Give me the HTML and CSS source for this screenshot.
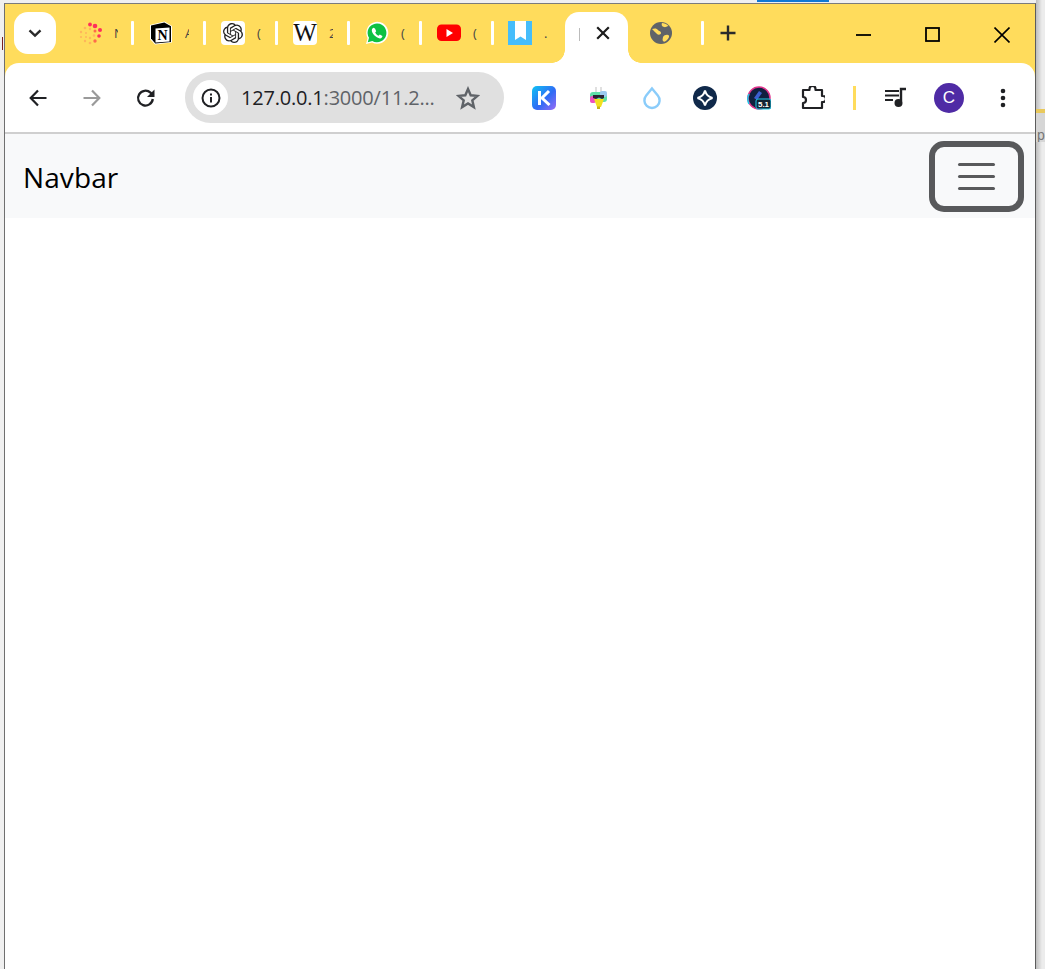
FILE: index.html
```html
<!DOCTYPE html>
<html lang="en">
<head>
<meta charset="utf-8">
<title>Navbar</title>
<link rel="stylesheet" href="styles.css">
</head>
<body>
<div class="taskbar-hint"></div>
<div class="left-mark"></div>
<div class="side-peek"><span class="peek-band"></span><span class="peek-text">p°</span></div>
<div class="window">
  <div class="tabstrip">
    <div class="tab-search"><svg width="16" height="16" viewBox="0 0 16 16"><path d="M2.500 5.300 8 10.500l5.500-5.200" fill="none" stroke="#2a2a2a" stroke-width="2.400"/></svg></div>
    <div class="tab t1">
      <svg class="fav" width="24" height="24" viewBox="0 0 24 24"><g fill="#ff2f5b"><circle cx="17" cy="5" r="2.300"/><circle cx="22" cy="9" r="2"/><circle cx="12" cy="3.500" r="1.900"/><circle cx="21" cy="15" r="1.800"/><circle cx="17" cy="10" r="1.500" fill="#ff6b4a"/><circle cx="17" cy="20" r="1.700" fill="#ff6b4a"/></g><g fill="#ffb55c"><circle cx="7" cy="7" r="1.300"/><circle cx="3" cy="11" r="1.200"/><circle cx="3" cy="16" r="1.100"/><circle cx="7" cy="20" r="1.200"/><circle cx="12" cy="22" r="1.300"/><circle cx="12" cy="8" r="1.200"/><circle cx="8" cy="12" r="1"/><circle cx="12" cy="17" r="1.200"/><circle cx="16" cy="14.500" r="1.300"/><circle cx="8" cy="16" r="1"/></g></svg>
      <span class="tab-clip">N</span>
    </div>
    <i class="sep"></i>
    <div class="tab">
      <svg class="fav" width="24" height="24" viewBox="0 0 24 24"><path d="M1 4 15.500.5 23 5v16.500L6 23.500l-5-5.500z" fill="#fff"/><path d="M2 4.500 15.300 1.500 22 5.200V21L6.300 22.500 2 17.500z" fill="#000"/><path d="M6.500 7.500 20.500 6.500V20.500L6.500 21.500z" fill="#fff"/><text x="13.500" y="19" class="fav-n">N</text></svg>
      <span class="tab-clip">A</span>
    </div>
    <i class="sep"></i>
    <div class="tab">
      <span class="fav-tile"><svg width="20" height="20" viewBox="0 0 24 24"><path fill="#222" d="M22.2819 9.8211a5.9847 5.9847 0 0 0-.5157-4.9108 6.0462 6.0462 0 0 0-6.5098-2.9A6.0651 6.0651 0 0 0 4.9807 4.1818a5.9847 5.9847 0 0 0-3.9977 2.9 6.0462 6.0462 0 0 0 .7427 7.0966 5.98 5.98 0 0 0 .511 4.9107 6.051 6.051 0 0 0 6.5146 2.9001A5.9847 5.9847 0 0 0 13.2599 24a6.0557 6.0557 0 0 0 5.7718-4.2058 5.9894 5.9894 0 0 0 3.9977-2.9001 6.0557 6.0557 0 0 0-.7475-7.0729zm-9.022 12.6081a4.4755 4.4755 0 0 1-2.8764-1.0408l.1419-.0804 4.7783-2.7582a.7948.7948 0 0 0 .3927-.6813v-6.7369l2.02 1.1686a.071.071 0 0 1 .038.052v5.5826a4.504 4.504 0 0 1-4.4945 4.4944zm-9.6607-4.1254a4.4708 4.4708 0 0 1-.5346-3.0137l.142.0852 4.783 2.7582a.7712.7712 0 0 0 .7806 0l5.8428-3.3685v2.3324a.0804.0804 0 0 1-.0332.0615L9.74 19.9502a4.4992 4.4992 0 0 1-6.1408-1.6464zM2.3408 7.8956a4.485 4.485 0 0 1 2.3655-1.9728V11.6a.7664.7664 0 0 0 .3879.6765l5.8144 3.3543-2.0201 1.1685a.0757.0757 0 0 1-.071 0l-4.8303-2.7865A4.504 4.504 0 0 1 2.3408 7.872zm16.5963 3.8558L13.1038 8.364 15.1192 7.2a.0757.0757 0 0 1 .071 0l4.8303 2.7913a4.4944 4.4944 0 0 1-.6765 8.1042v-5.6772a.79.79 0 0 0-.407-.667zm2.0107-3.0231l-.142-.0852-4.7735-2.7818a.7759.7759 0 0 0-.7854 0L9.409 9.2297V6.8974a.0662.0662 0 0 1 .0284-.0615l4.8303-2.7866a4.4992 4.4992 0 0 1 6.6802 4.66zM8.3065 12.863l-2.02-1.1638a.0804.0804 0 0 1-.038-.0567V6.0742a4.4992 4.4992 0 0 1 7.3757-3.4537l-.142.0805L8.704 5.459a.7948.7948 0 0 0-.3927.6813zm1.0976-2.3654l2.602-1.4998 2.6069 1.4998v2.9994l-2.5974 1.4997-2.6067-1.4997Z"/></svg></span>
      <span class="tab-clip">(</span>
    </div>
    <i class="sep"></i>
    <div class="tab">
      <span class="fav-tile wiki">W</span>
      <span class="tab-clip">2</span>
    </div>
    <i class="sep"></i>
    <div class="tab">
      <svg class="fav" width="24" height="24" viewBox="0 0 24 24"><path d="M1 23l1.600-6A11 11 0 1 1 7 21.400z" fill="#fff"/><path d="M2.800 21.200l1.200-4.400A9.400 9.400 0 1 1 7.300 20z" fill="#0dc143"/><path d="M8.500 6.800c-.5 0-1.700 1-1.700 2.800 0 2.500 3.800 7.500 8.200 7.800 1.600 0 2.500-1.300 2.400-2.400l-2.600-1.400-1.200 1.200c-1.400-.5-2.800-1.900-3.400-3.400l1-1.200-1.200-2.700z" fill="#fff"/></svg>
      <span class="tab-clip">(</span>
    </div>
    <i class="sep"></i>
    <div class="tab">
      <svg class="fav" width="24" height="24" viewBox="0 0 24 24"><rect y="3.500" width="24" height="16.500" rx="4.500" fill="#f00"/><path d="M9.500 8v8l6.500-4z" fill="#fff"/></svg>
      <span class="tab-clip">(</span>
    </div>
    <i class="sep"></i>
    <div class="tab t-last">
      <svg class="fav" width="24" height="24" viewBox="0 0 24 24"><rect width="24" height="24" fill="#45bdfb"/><path d="M7 0h11v19l-5.500-3.500L7 19z" fill="#fff"/></svg>
      <span class="tab-clip">.</span>
    </div>
    <div class="tab-active">
      <i class="active-bar"></i>
      <svg width="16" height="16" viewBox="0 0 16 16"><path d="M2.200 2.200l11.600 11.600m0-11.600L2.200 13.800" stroke="#1c1c1c" stroke-width="2.200"/></svg>
    </div>
    <div class="tab t-globe">
      <svg width="24" height="24" viewBox="0 0 24 24"><circle cx="12" cy="12" r="11" fill="#5f6368"/><path d="M3 8c3-1 5-.5 6 1s3 1 3 3-3 2-4 1-3-3-5-5zM14 16c1-1.500 3-2.500 5-2s1 3-1 5-3 2-4 1 0-3 0-4zM13 2c2 0 5 1 6.500 3-2 .5-3 1.500-4.500 1s-3-1.500-2-4z" fill="#ffdc5c"/></svg>
    </div>
    <i class="sep"></i>
    <div class="new-tab"><svg width="16" height="16" viewBox="0 0 16 16"><path d="M8 .5v15M.5 8h15" stroke="#2a2a2a" stroke-width="2.400"/></svg></div>
    <div class="win-controls">
      <svg width="16" height="16" viewBox="0 0 16 16"><path d="M0 8h15" stroke="#000" stroke-width="1.800"/></svg>
      <svg width="16" height="16" viewBox="0 0 16 16"><rect x="1" y="1" width="13" height="13" fill="none" stroke="#000" stroke-width="1.800"/></svg>
      <svg width="16" height="16" viewBox="0 0 16 16"><path d="M.5.500l15 15m0-15-15 15" stroke="#000" stroke-width="1.600"/></svg>
    </div>
  </div>
  <div class="toolbar">
    <div class="nav-btns">
      <svg width="20" height="20" viewBox="0 0 20 20"><path d="M18.500 10H3M10 2.500 2.700 10l7.300 7.500" fill="none" stroke="#202124" stroke-width="2.200"/></svg>
      <svg width="20" height="20" viewBox="0 0 20 20"><path d="M1.500 10H17M10 2.500l7.300 7.500-7.300 7.500" fill="none" stroke="#9a9a9a" stroke-width="2.200"/></svg>
      <svg width="20" height="20" viewBox="0 0 20 20"><path d="M16.800 11a7.400 7.400 0 1 1-2.300-6.300L16.800 7" fill="none" stroke="#202124" stroke-width="2.300"/><path d="M18.500 1.500V9H11z" fill="#202124"/></svg>
    </div>
    <div class="omnibox">
      <span class="site-info"><svg width="20" height="20" viewBox="0 0 20 20"><circle cx="10" cy="10" r="8.500" fill="none" stroke="#202124" stroke-width="2"/><rect x="9" y="9" width="2" height="5.500" fill="#202124"/><rect x="9" y="5.500" width="2" height="2" fill="#202124"/></svg></span>
      <span class="url"><span class="host">127.0.0.1</span>:3000/11.2...</span>
      <svg class="star" width="24" height="24" viewBox="0 0 24 24"><path d="M12 3l2.700 6.300 6.800.6-5.200 4.500 1.600 6.700-5.900-3.600-5.900 3.600 1.600-6.700-5.200-4.500 6.800-.6z" fill="none" stroke="#5f6368" stroke-width="2.400"/></svg>
    </div>
    <div class="extensions">
      <svg width="24" height="24" viewBox="0 0 24 24"><defs><linearGradient id="k" x1="0" y1="0" x2="1" y2="1"><stop offset="0" stop-color="#10c4f4"/><stop offset=".55" stop-color="#2f6bf5"/><stop offset="1" stop-color="#9a6cf5"/></linearGradient></defs><rect width="24" height="24" rx="5" fill="url(#k)"/><path d="M7.500 5v14M17 5l-7 7 7.500 7" fill="none" stroke="#fff" stroke-width="3"/></svg>
      <svg width="24" height="24" viewBox="0 0 24 24"><path d="M10 1v6M15 1v6" stroke="#e0e0e0" stroke-width="2"/><rect x="4" y="6" width="17" height="10" rx="3" fill="#5fe0a8"/><rect x="4" y="10" width="6" height="7" rx="2" fill="#ee4fc0"/><rect x="14" y="5" width="7" height="6" rx="2" fill="#9bc8ee"/><path d="M8 13h10l-3 8h-4z" fill="#f2e01e"/><path d="M7 9h11v3l-2 1-3-1.500L10 13l-3-1z" fill="#2a2233"/><rect x="11" y="20.500" width="3" height="2.500" fill="#c5b616"/></svg>
      <svg width="24" height="24" viewBox="0 0 24 24"><path d="M12 2.500l5.800 7a7.600 7.600 0 1 1-11.600 0z" fill="none" stroke="#8accfa" stroke-width="2.400"/></svg>
      <svg width="24" height="24" viewBox="0 0 24 24"><circle cx="12" cy="12" r="12" fill="#10294a"/><path d="M12 4.500c1 4 3.500 6.500 7.500 7.500-4 1-6.500 3.500-7.500 7.500-1-4-3.500-6.500-7.500-7.500 4-1 6.500-3.500 7.500-7.500z" fill="none" stroke="#fff" stroke-width="2"/></svg>
      <svg width="24" height="24" viewBox="0 0 24 24"><circle cx="12" cy="12" r="11" fill="#10203f" stroke="#e0348c" stroke-width="1.500"/><path d="M2 18A11 11 0 0 1 2 8" fill="none" stroke="#1ec8e8" stroke-width="1.500"/><path d="M7 12l5-7 3 2-5 7z" fill="#3b5fd0"/><rect x="9" y="13" width="15" height="10" rx="2" fill="#123" stroke="#1ec8e8"/><text x="16.500" y="21" class="ver">5.1</text></svg>
      <svg width="24" height="24" viewBox="0 0 24 24"><path d="M2 4h6.500V3a3 3 0 0 1 6 0v1H21v6h1a3 3 0 0 1 0 6h-1v6H2v-5c4 0 4-6 0-6z" fill="none" stroke="#202124" stroke-width="2.200" stroke-linejoin="round"/></svg>
    </div>
    <i class="tool-sep"></i>
    <svg class="media" width="24" height="24" viewBox="0 0 24 24"><path d="M1 5h14M1 9.500h14M1 14h8" stroke="#202124" stroke-width="2"/><path d="M17 15V3h5" fill="none" stroke="#202124" stroke-width="2.400"/><circle cx="14.500" cy="17" r="4" fill="#202124"/></svg>
    <span class="avatar">C</span>
    <svg class="menu" width="6" height="24" viewBox="0 0 6 24"><circle cx="3" cy="5" r="2.300" fill="#202124"/><circle cx="3" cy="12" r="2.300" fill="#202124"/><circle cx="3" cy="19" r="2.300" fill="#202124"/></svg>
  </div>
  <nav class="navbar">
    <a class="brand">Navbar</a>
    <button class="toggler" type="button" aria-label="Toggle navigation"><span class="bar"></span><span class="bar"></span><span class="bar"></span></button>
  </nav>
  <main class="page"></main>
</div>
</body>
</html>
```

FILE: styles.css
```css
* { box-sizing: border-box; }
html, body { margin: 0; height: 100%; overflow: hidden; }
body {
  position: relative;
  background: linear-gradient(to right, #f0f0f0 1036px, #bdbdbd 1036px, #ececec 1042px);
  padding: 3px 9px 0 4px;
  font-family: "Open Sans", "Liberation Sans", sans-serif;
}
.taskbar-hint {
  position: absolute; top: 0; left: 757px; width: 72px; height: 2px; background: #0f78d4;
}
.left-mark {
  position: absolute; top: 37px; left: 2px; width: 1px; height: 13px; background: #7a2020;
}
.side-peek {
  position: absolute; top: 109px; right: 0; width: 9px; height: 33px; overflow: hidden; background: #d6d6d6;
}
.peek-band { display: block; height: 4px; background: #e9c95c; }
.peek-text { display: block; font: 14px "Liberation Sans", sans-serif; color: #777; line-height: 44px; margin-left: 1px; white-space: nowrap; }
.window {
  height: 100%;
  width: 1032px;
  background: #ffdc5c;
  border-left: 1px solid #6f6f6f;
  border-right: 1px solid #5c5c5c;
  border-top: 1px solid #7b7b7b;
  display: flex;
  flex-direction: column;
}
.tabstrip {
  height: 59px;
  flex: none;
  display: flex;
  align-items: center;
  padding: 0 0 0 9px;
  position: relative;
}
.tab-search {
  width: 42px; height: 42px; margin-top: -1px;
  background: #fff; border-radius: 14px;
  display: flex; align-items: center; justify-content: center;
  margin-right: 22px;
}
.tab {
  display: flex; align-items: center; width: 54px; height: 24px; margin-top: -1px; flex: none; overflow: hidden;
}
.tab.t1 { width: 53px; }
.tab.t-last { width: 57px; margin-left: -1px; }
.fav { flex: none; }
.fav-tile {
  width: 24px; height: 24px; background: #fff; border-radius: 4px; flex: none;
  display: flex; align-items: center; justify-content: center;
}
.wiki { font: 400 25px "Liberation Serif", serif; color: #111; }
.fav-n { font: 700 14px "Liberation Serif", serif; text-anchor: middle; fill: #000; }
.tab-clip { font-size: 13px; color: #444; margin-left: 12px; width: 4px; overflow: hidden; line-height: 14px; flex: none; }
.sep { width: 3px; height: 24px; background: #fff; flex: none; margin-top: -1px; margin-right: 15px; border-radius: 1px; }
.tab-active {
  position: relative; flex: none; width: 63px; height: 51px; margin-top: 8px; background: #fff;
  border-radius: 14px 14px 0 0;
  display: flex; align-items: flex-start; justify-content: flex-end; padding: 13px 17px 0 0;
}
.active-bar { position: absolute; left: 14px; top: 16px; width: 1px; height: 13px; background: #bbb; }
.tab-active::before, .tab-active::after {
  content: ""; position: absolute; bottom: 0; width: 13px; height: 13px;
  background: radial-gradient(circle at 0 0, #ffdc5c 12.5px, #fff 13px);
}
.tab-active::before { left: -13px; }
.tab-active::after { right: -13px; transform: scaleX(-1); }
.tab.t-globe { padding-left: 21px; width: 73px; }
.new-tab { width: 16px; height: 16px; margin-top: -1px; margin-left: 1px; display: flex; }
.win-controls { margin-left: auto; margin-top: 2px; display: flex; gap: 53px; padding-right: 25px; }
.toolbar {
  height: 71px;
  flex: none;
  background: #fff;
  border-bottom: 2px solid #cfcfcf;
  border-radius: 14px 14px 0 0;
  display: flex;
  align-items: center;
  padding-left: 23px;
}
.nav-btns { display: flex; gap: 34px; width: 157px; flex: none; }
.omnibox {
  width: 319px; height: 51px; flex: none; background: #e0e0e0; border-radius: 26px;
  display: flex; align-items: center; padding: 0 24px 0 8px;
}
.site-info {
  width: 35px; height: 35px; border-radius: 50%; background: #fff; flex: none;
  display: flex; align-items: center; justify-content: center;
}
.url { font: 20px "Open Sans", sans-serif; letter-spacing: -.2px; color: #5f6368; margin-left: 13px; white-space: nowrap; flex: 1; min-width: 0; }
.host { color: #202124; }
.star { flex: none; }
.extensions { display: flex; gap: 29.8px; margin-left: 28px; flex: none; }
.ver { font: 700 8px "Liberation Sans", sans-serif; fill: #fff; text-anchor: middle; }
.tool-sep { width: 3px; height: 24px; background: #ffdc5c; margin-left: 28px; flex: none; }
.media { margin-left: 28px; flex: none; }
.avatar {
  width: 30px; height: 30px; border-radius: 50%; background: #4f2ba5; color: #fff;
  font: 17px "Liberation Sans", sans-serif; display: flex; align-items: center; justify-content: center;
  margin-left: 26px; flex: none;
}
.menu { margin-left: 36px; flex: none; }
.navbar {
  height: 84px; flex: none; background: #f8f9fa;
  display: flex; align-items: center; justify-content: space-between;
  padding: 0 11px 0 18px;
}
.brand { font: 28px "Open Sans", sans-serif; letter-spacing: .1px; color: #000; padding-top: 2px; }
.toggler {
  width: 95px; height: 71px; background: transparent; padding: 0;
  border: 6px solid #58595b; border-radius: 15px;
  display: flex; flex-direction: column; align-items: center; justify-content: center; gap: 9px;
}
.bar { width: 37px; height: 3px; background: #58595b; border-radius: 1.500px; flex: none; }
.page { flex: 1; background: #fff; }
```
